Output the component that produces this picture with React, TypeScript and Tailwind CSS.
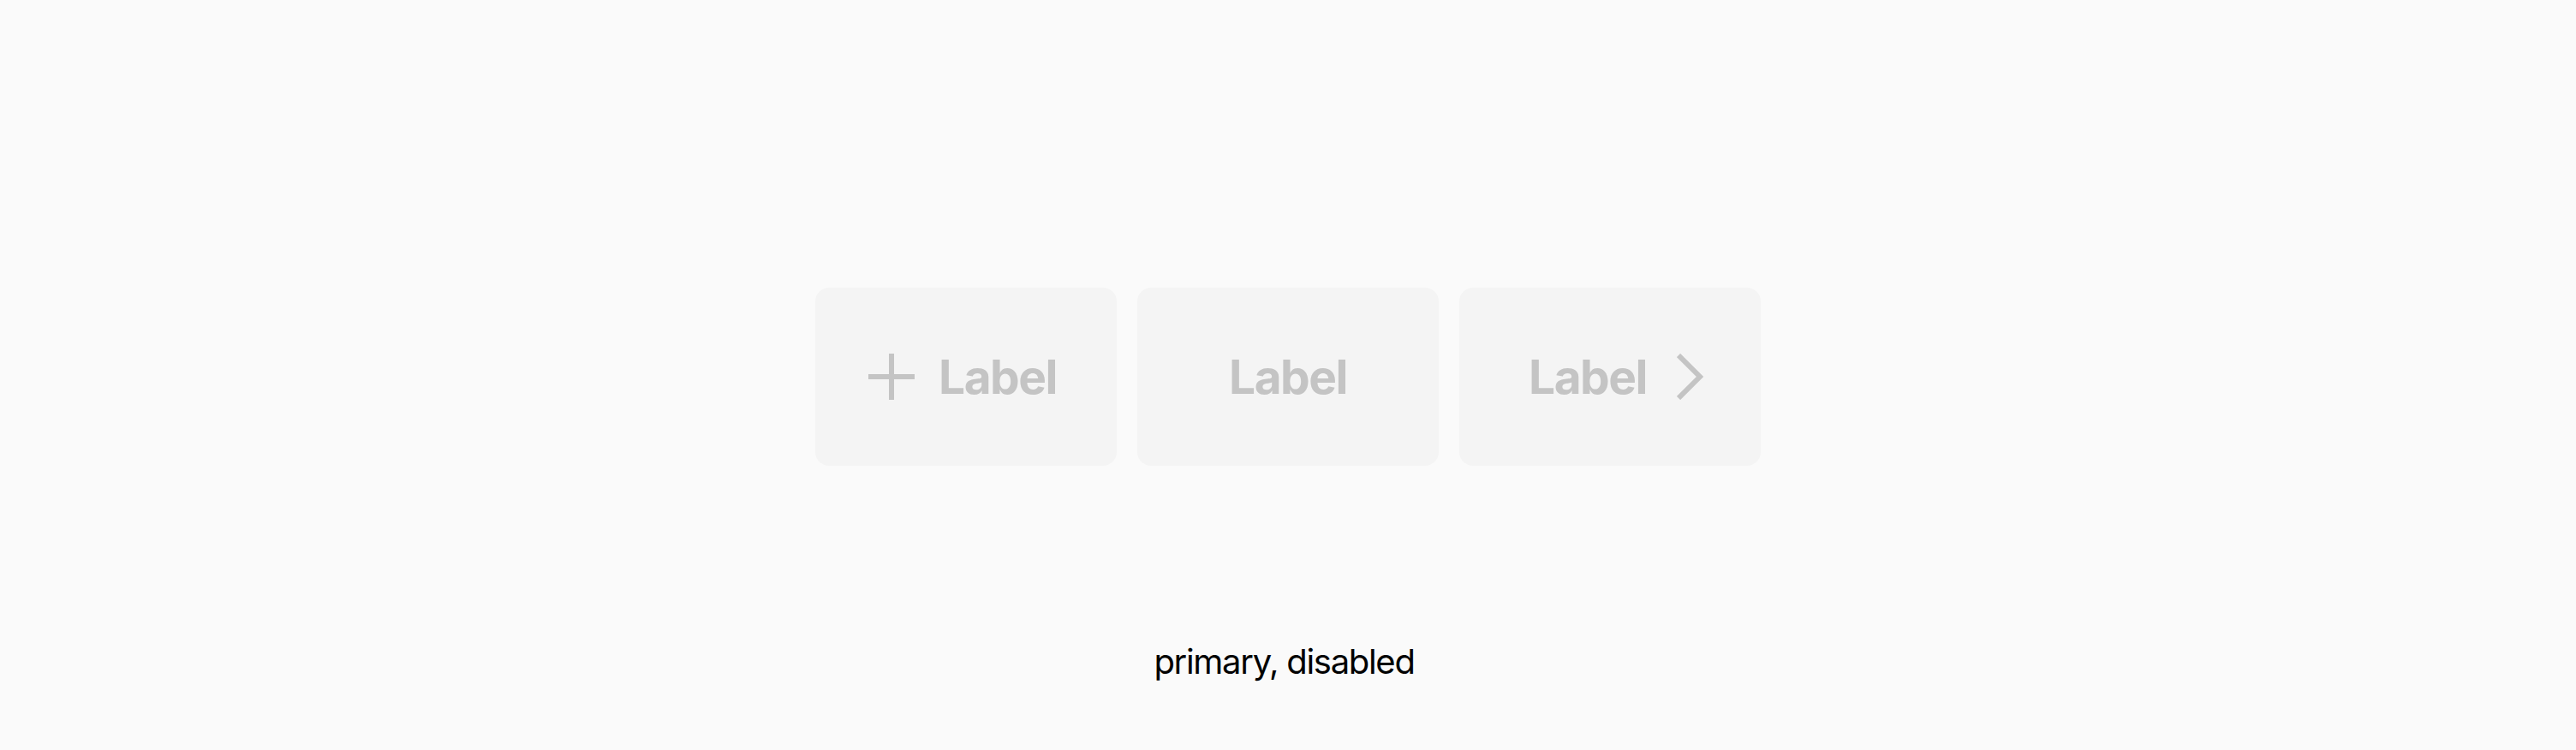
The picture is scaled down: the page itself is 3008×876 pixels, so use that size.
import React from "react";

const font = { fontFamily: "Inter, 'Noto Sans', sans-serif" };

function Plus() {
  return (
    <svg width="54" height="54" viewBox="0 0 54 54" className="shrink-0">
      <path d="M27 0V54M0 27H54" stroke="#c4c4c4" strokeWidth="6" fill="none" />
    </svg>
  );
}

function Chevron() {
  return (
    <svg width="32" height="54" viewBox="0 0 32 54" className="shrink-0">
      <path d="M2 2L27 27L2 52" stroke="#c4c4c4" strokeWidth="6" fill="none" />
    </svg>
  );
}

export default function App() {
  return (
    <div className="w-full h-[876px] bg-[#fafafa] flex flex-col items-center pt-[336px]" style={font}>
      <div className="flex gap-[24px]">
        <button disabled className="w-[352px] h-[208px] rounded-[16px] bg-[#f4f4f4] flex items-center justify-center gap-[28px] pr-[8px] text-[#c4c4c4] text-[55px] font-bold tracking-[-1.5px]">
          <Plus />
          <span>Label</span>
        </button>
        <button disabled className="w-[352px] h-[208px] rounded-[16px] bg-[#f4f4f4] flex items-center justify-center text-[#c4c4c4] text-[55px] font-bold tracking-[-1.5px]">
          <span>Label</span>
        </button>
        <button disabled className="w-[352px] h-[208px] rounded-[16px] bg-[#f4f4f4] flex items-center justify-center gap-[35px] pl-[15px] text-[#c4c4c4] text-[55px] font-bold tracking-[-1.5px]">
          <span>Label</span>
          <Chevron />
        </button>
      </div>
      <div className="mt-[205px] pr-[9px] text-[40px] leading-[48px] text-black tracking-[-1.3px]">primary, disabled</div>
    </div>
  );
}
